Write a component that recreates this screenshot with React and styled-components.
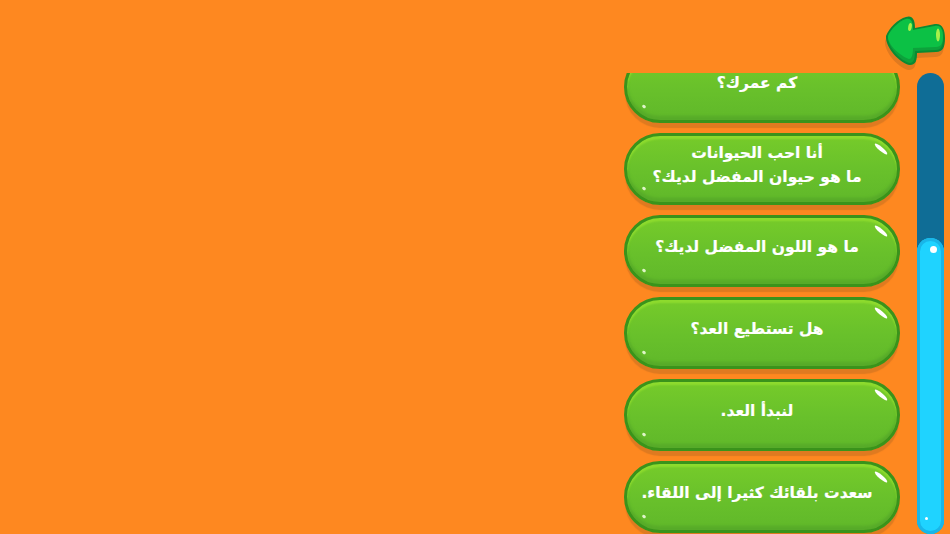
import React from 'react'
import styled, { createGlobalStyle } from 'styled-components'

const GlobalStyle = createGlobalStyle`
    html, body {
        margin: 0;
        padding: 0;
        background: #fe8820;
    }
    body {
        font-family: "DejaVu Sans", "Noto Sans", sans-serif;
    }
`

const Screen = styled.div`
    width: 950px;
    height: 534px;
    overflow: hidden;
    background: #fe8820;
    display: flex;
    flex-direction: column;
    align-items: flex-end;
`

const TopBar = styled.div`
    height: 73px;
    width: 100%;
    flex-shrink: 0;
    display: flex;
    justify-content: flex-end;
    align-items: flex-start;
    padding: 14px 3px 0 0;
    box-sizing: border-box;
`

const BackButton = styled.button`
    border: 0;
    background: none;
    padding: 0;
    width: 64px;
    height: 56px;
    cursor: pointer;
    svg {
        display: block;
    }
`

const Body = styled.div`
    flex: 1;
    min-height: 0;
    display: flex;
    align-items: stretch;
    gap: 17px;
    padding-right: 6px;
`

const List = styled.div`
    width: 276px;
    overflow: hidden;
    display: flex;
    flex-direction: column;
    gap: 10px;
`

const Bubble = styled.button`
    position: relative;
    flex-shrink: 0;
    width: 276px;
    height: 72px;
    margin-top: ${(p) => p.$offset || 0}px;
    box-sizing: border-box;
    border: 3px solid #3a931b;
    border-radius: 36px;
    background: linear-gradient(#76cb2a, #69c12b 50%, #60b82a);
    box-shadow: 0 6px 1px -1px #df7a20, inset 0 3px 2px #8edb2e, inset 0 -4px 3px #57ab29;
    color: #fff;
    font-family: "DejaVu Sans", "Noto Sans", sans-serif;
    font-weight: 700;
    font-size: 15.5px;
    line-height: 24px;
    white-space: nowrap;
    text-align: center;
    direction: rtl;
    -webkit-text-stroke: 0.2px #fff;
    padding: 0 22px 9px 12px;
    &::before {
        content: '';
        position: absolute;
        top: 11px;
        right: 8px;
        width: 16px;
        height: 4px;
        border-radius: 50%;
        background: #fff;
        transform: rotate(40deg);
    }
    &::after {
        content: '';
        position: absolute;
        bottom: 12px;
        left: 15px;
        width: 4px;
        height: 3px;
        border-radius: 50%;
        background: #dff5c8;
        transform: rotate(40deg);
    }
`

const Track = styled.div`
    width: 27px;
    height: 100%;
    border-radius: 14px;
    background: #0f6d96;
    display: flex;
    flex-direction: column;
    justify-content: flex-end;
`

const Thumb = styled.div`
    position: relative;
    height: 296px;
    border-radius: 14px;
    background: #1fd3ff;
    box-shadow: inset 0 0 0 3px #19b6e8;
    &::before, &::after {
        content: '';
        position: absolute;
        border-radius: 50%;
        background: #fff;
    }
    &::before {
        top: 8px;
        left: 13px;
        width: 7px;
        height: 7px;
    }
    &::after {
        bottom: 14px;
        left: 8px;
        width: 3px;
        height: 3px;
    }
`

const questions = [
    { id: 1, lines: ['كم عمرك؟'], offset: -22 },
    { id: 2, lines: ['أنا احب الحيوانات', 'ما هو حيوان المفضل لديك؟'] },
    { id: 3, lines: ['ما هو اللون المفضل لديك؟'] },
    { id: 4, lines: ['هل تستطيع العد؟'] },
    { id: 5, lines: ['لنبدأ العد.'] },
    { id: 6, lines: ['سعدت بلقائك كثيرا إلى اللقاء.'] },
]

const arrowOutline =
    'M3 22 C6 14 15 5 23 3 C29 1 32 5 32 14 L52 10 C59 9 62 15 62 24 C62 33 60 38 53 38 L34 39 C34 46 33 51 27 51 C18 50 2 34 3 22 Z'

const BackArrow = () => (
    <svg width="64" height="56" viewBox="0 0 64 56">
        <path d={arrowOutline} fill="#df7a20" transform="translate(-1 5)" />
        <path d={arrowOutline} fill="#0a8a33" />
        <path
            d="M5 22 C8 15 16 7 23 5 C28 4 30 7 30 16 L52 12 C58 11 60 16 60 24 C60 32 58 36 53 36 L32 37 C32 44 31 49 27 49 C19 48 4 33 5 22 Z"
            fill="#0da23b"
        />
        <path
            d="M5 22 C8 15 16 7 23 5 C28 4 30 7 30 16 L52 12 C58 11 60 16 60 23 C60 29 58 33 53 33 L30 34 C30 40 29 45 26 45 C19 43 4 31 5 22 Z"
            fill="#0cc145"
        />
        <ellipse cx="27" cy="13" rx="1.8" ry="4" fill="#a8f04a" transform="rotate(10 27 13)" />
        <ellipse cx="55" cy="21" rx="2" ry="6.5" fill="#a8f04a" />
    </svg>
)

export default function App() {
    return (
        <>
            <GlobalStyle />
            <Screen>
                <TopBar>
                    <BackButton aria-label="back">
                        <BackArrow />
                    </BackButton>
                </TopBar>
                <Body>
                    <List>
                        {questions.map((q) => (
                            <Bubble key={q.id} $offset={q.offset}>
                                {q.lines.map((line) => (
                                    <div key={line}>{line}</div>
                                ))}
                            </Bubble>
                        ))}
                    </List>
                    <Track>
                        <Thumb />
                    </Track>
                </Body>
            </Screen>
        </>
    )
}
